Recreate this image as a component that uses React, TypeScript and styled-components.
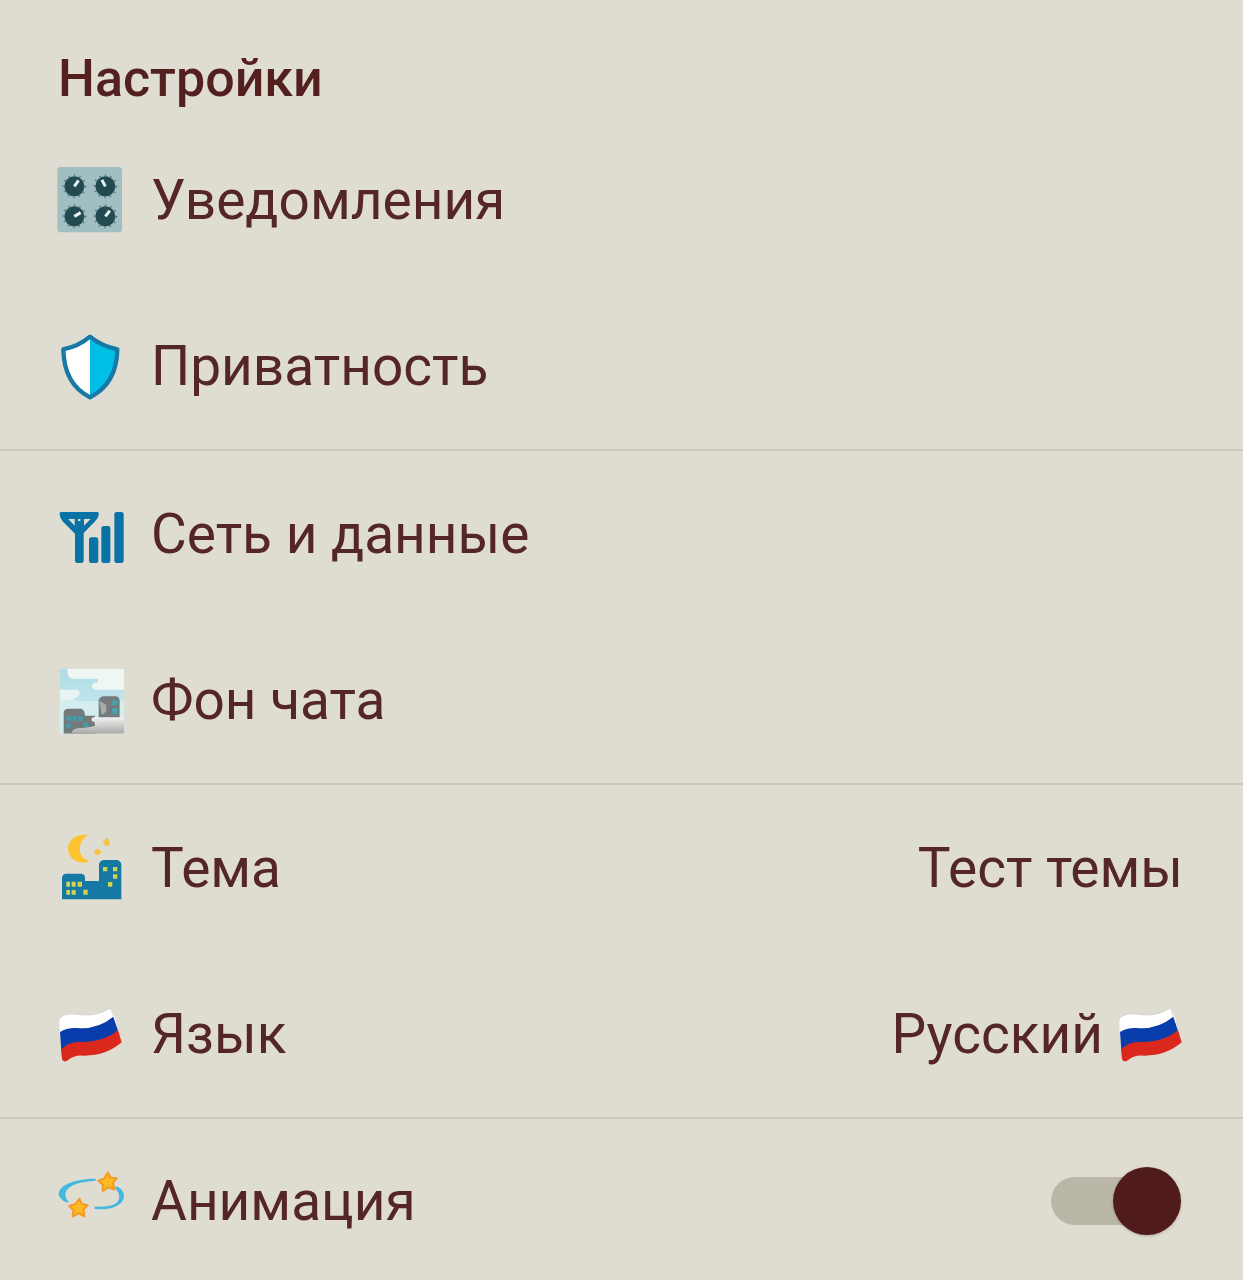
import React, { useState } from "react";
import styled, { createGlobalStyle } from "styled-components";

const GlobalStyle = createGlobalStyle`
  *, *::before, *::after { box-sizing: border-box; }
  body { margin: 0; background: #dfddd2; }
`;

const Panel = styled.main`
  height: 100vh;
  overflow-y: auto;
  scrollbar-width: none;
  background: #dfddd2;
  color: #552626;
  font-family: Roboto, "Noto Sans", sans-serif;
`;

const Title = styled.h1`
  margin: 0;
  height: 117px;
  padding: 49px 60px 0 58px;
  color: #541f1f;
  font-size: 52px;
  line-height: 60px;
  font-weight: 500;
`;

const Section = styled.section`
  display: flex;
  flex-direction: column;

  & + & {
    border-top: 2px solid #cbc9be;
  }
`;

const rowStyles = `
  display: flex;
  align-items: center;
  gap: 28px;
  width: 100%;
  height: 166px;
  padding: 0 60px 0 57px;
  border: 0;
  background: none;
  color: inherit;
  font-family: inherit;
  font-size: 55px;
  line-height: 66px;
  text-align: left;
  cursor: pointer;
`;

const Row = styled.button`${rowStyles}`;

const ToggleRow = styled.label`
  ${rowStyles}
  height: 164px;
`;

const Label = styled.span`
  flex: 1;
`;

const Value = styled.span`
  display: flex;
  align-items: center;
  gap: 14px;
`;

const Icon = styled.svg`
  flex: none;
  width: 66px;
  height: 66px;
  overflow: visible;
`;

const Switch = styled.input`
  appearance: none;
  position: relative;
  display: flex;
  align-items: center;
  flex: none;
  width: 130px;
  height: 68px;
  margin: 0 2px 0 0;
  cursor: pointer;

  &::before {
    content: "";
    position: absolute;
    inset: 10px 4px 10px 0;
    border-radius: 24px;
    background: #bab7a9;
  }

  &::after {
    content: "";
    position: relative;
    width: 68px;
    height: 68px;
    border-radius: 50%;
    background: #501c1b;
    box-shadow: 0 1px 3px rgba(60, 30, 25, 0.25);
  }

  &:checked::after {
    margin-left: auto;
  }
`;

function Knob({ x, y, angle }: { x: number; y: number; angle: number }) {
  return (
    <g transform={`translate(${x} ${y})`}>
      <circle r="33" fill="none" stroke="#557b81" strokeWidth="6" strokeDasharray="4 13" />
      <circle r="30" fill="#234a50" />
      <path d="M0 0V-22" stroke="#e7f3ef" strokeWidth="9" transform={`rotate(${angle})`} />
    </g>
  );
}

function KnobsIcon() {
  return (
    <Icon viewBox="36 36 198 198" aria-hidden="true">
      <rect x="37" y="36" width="194" height="196" rx="10" fill="#a1bec3" />
      <Knob x={88} y={94} angle={35} />
      <Knob x={181} y={94} angle={-28} />
      <Knob x={88} y={184} angle={60} />
      <Knob x={181} y={184} angle={38} />
    </Icon>
  );
}

function ShieldIcon() {
  return (
    <Icon viewBox="36 24 198 198" aria-hidden="true">
      <path d="M135 35C114 53 86 67 55 73C56 134 75 187 135 217Z" fill="#fff" />
      <path d="M135 35C158 54 188 67 217 73C216 134 195 187 135 217Z" fill="#00bee5" />
      <path
        d="M135 35C114 53 86 67 55 73C56 134 75 187 135 217C195 187 216 134 217 73C188 67 158 54 135 35Z"
        fill="none" stroke="#1679a6" strokeWidth="13" strokeLinejoin="round"
      />
    </Icon>
  );
}

function SignalIcon() {
  return (
    <Icon viewBox="36 18 198 198" aria-hidden="true">
      <g fill="#0973a6">
        <path
          fillRule="evenodd"
          d="M49 51H156Q163 51 161 60Q160 68 149 80L116 114V197Q116 204 109 204H97Q90 204 90 197V116L54 80Q45 70 44 59Q42 51 49 51ZM70 72L89 92V72ZM99 72V78H106V72ZM117 72V92L137 72Z"
        />
        <rect x="132" y="127" width="28" height="77" rx="7" />
        <rect x="169" y="93" width="27" height="111" rx="7" />
        <rect x="208" y="51" width="28" height="153" rx="7" />
      </g>
    </Icon>
  );
}

function WallpaperIcon() {
  return (
    <Icon viewBox="36 36 198 198" aria-hidden="true">
      <defs>
        <linearGradient id="sky" x1="0" y1="0" x2="0" y2="1">
          <stop offset="0" stopColor="#acdce6" />
          <stop offset="1" stopColor="#d5edf0" />
        </linearGradient>
        <linearGradient id="fog" x1="0" y1="0" x2="0" y2="1">
          <stop offset="0" stopColor="#f1f1ef" />
          <stop offset="1" stopColor="#aaa9a9" />
        </linearGradient>
        <clipPath id="scene"><rect x="44" y="41" width="194" height="195" rx="8" /></clipPath>
      </defs>
      <g clipPath="url(#scene)">
        <rect x="44" y="41" width="194" height="195" fill="url(#sky)" />
        <path d="M64 41H238V104H151Q140 102 141 91Q143 82 159 82V71H83Q67 70 68 55Q69 44 64 41Z" fill="#eef7f4" />
        <path d="M44 104H96Q105 106 103 117Q101 127 85 130V236H44Z" fill="#e9f5f4" />
        <path d="M44 134H86Q96 139 110 139H238V236H44Z" fill="#d4eef0" />
        <path d="M161 190V136Q163 127 173 124H213Q222 126 224 136V190Z" fill="#747b7c" />
        <path d="M163 137L184 150V170L170 180Z" fill="#a8aaa5" />
        <path d="M202 136H217V151H202ZM202 160H217V176H202Z" fill="#45a6b3" />
        <path d="M56 236V174Q56 162 68 161H108Q119 163 120 182H150V236Z" fill="#737a7a" />
        <path d="M64 184H78V197H64ZM83 184H96V197H83ZM100 184H113V197H100ZM64 205H77V219H64ZM115 203H130V216H115Z" fill="#409eaa" />
        <path d="M238 187H146Q137 190 140 197L158 208Q149 217 98 220Q81 222 79 236H238Z" fill="url(#fog)" />
      </g>
    </Icon>
  );
}

function NightIcon() {
  return (
    <Icon viewBox="36 36 198 198" aria-hidden="true">
      <path d="M128 36C83 28 57 67 76 99C87 118 115 124 135 113C99 108 93 61 128 36Z" fill="#fec32e" />
      <path d="M187 43L196 65L182 70L173 57ZM157 76L170 86L159 98L145 89Z" fill="#f4c342" />
      <path d="M51 229V163Q53 153 63 152H110Q120 154 120 164V174H162V125Q163 114 175 111H217Q228 114 229 125V229Z" fill="#1679a3" />
      <path d="M174 132H187V145H174ZM204 132H217V145H204ZM204 154H217V167H204ZM189 177H202V191H189ZM64 176H75V191H64ZM80 176H92V191H80ZM98 176H111V191H98ZM64 201H75V215H64ZM80 201H92V215H80ZM115 200H128V215H115Z" fill="#d2d34e" />
    </Icon>
  );
}

function FlagIcon() {
  return (
    <Icon viewBox="36 33 198 198" aria-hidden="true">
      <path d="M43 84Q62 69 91 72Q150 83 190 57Q196 54 199 60L210 82L217 115L48 158Q42 118 43 84Z" fill="#fff" />
      <path d="M45 126Q66 112 96 114Q157 119 205 80L219 122Q177 161 105 158Q69 158 49 182Z" fill="#0a3dac" />
      <path d="M48 179Q70 154 105 156Q177 157 219 120L230 157Q184 197 119 197Q86 193 65 213Q55 217 51 208Z" fill="#db281c" />
      <path d="M43 92V84Q62 69 91 72Q150 83 190 57Q196 54 199 60L205 80" fill="none" stroke="#c9c9c4" strokeWidth="2" />
    </Icon>
  );
}

const starPath = "M2 -28L10 -13L28 -11L17 3L21 23L3 16L-14 27L-13 8L-27 -4L-9 -11Z";

function DizzyIcon() {
  return (
    <Icon viewBox="36 42 198 198" aria-hidden="true">
      <path d="M152 74C78 73 23 103 47 133Q56 146 72 145C50 120 55 86 152 80ZM206 99C221 112 230 131 215 146Q199 160 149 158V165C203 171 238 149 237 125Q235 106 218 98Z" fill="#45b8dd" />
      <g fill="#ffb927" stroke="#f59a22" strokeWidth="6" strokeLinejoin="round">
        <path d={starPath} transform="translate(187 84)" />
        <path d={starPath} transform="translate(99 162) rotate(5)" />
      </g>
    </Icon>
  );
}

export default function App() {
  const [animated, setAnimated] = useState(true);

  return (
    <>
      <GlobalStyle />
      <Panel>
        <Title>Настройки</Title>
        <Section>
          <Row type="button"><KnobsIcon /><Label>Уведомления</Label></Row>
          <Row type="button"><ShieldIcon /><Label>Приватность</Label></Row>
        </Section>
        <Section>
          <Row type="button"><SignalIcon /><Label>Сеть и данные</Label></Row>
          <Row type="button"><WallpaperIcon /><Label>Фон чата</Label></Row>
        </Section>
        <Section>
          <Row type="button"><NightIcon /><Label>Тема</Label><Value>Тест темы</Value></Row>
          <Row type="button"><FlagIcon /><Label>Язык</Label><Value>Русский <FlagIcon /></Value></Row>
        </Section>
        <Section>
          <ToggleRow htmlFor="animation">
            <DizzyIcon />
            <Label>Анимация</Label>
            <Switch
              id="animation"
              type="checkbox"
              role="switch"
              checked={animated}
              onChange={(event) => setAnimated(event.target.checked)}
            />
          </ToggleRow>
        </Section>
      </Panel>
    </>
  );
}
